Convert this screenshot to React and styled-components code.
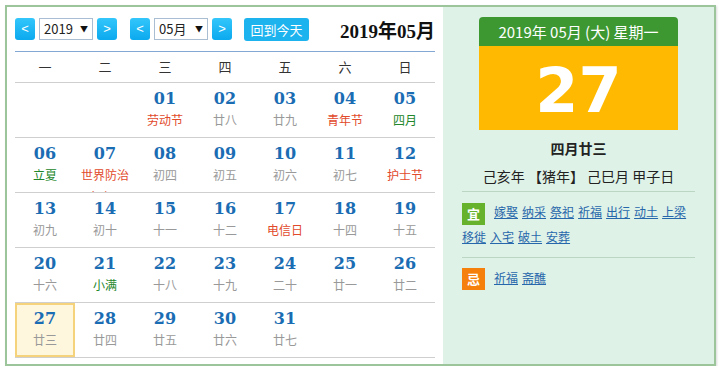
import React from 'react'
import styled, { createGlobalStyle } from 'styled-components'

const GlobalStyle = createGlobalStyle`
	body {
		margin: 0;
		background: #fff;
		font-family: "Noto Sans CJK SC", "Noto Sans", sans-serif;
	}
`

const weekdays = ['一', '二', '三', '四', '五', '六', '日']

// kind: f = festival (red), t = solar term / month start (green)
const days = [
	null, null,
	{ d: '01', l: '劳动节', k: 'f' },
	{ d: '02', l: '廿八' },
	{ d: '03', l: '廿九' },
	{ d: '04', l: '青年节', k: 'f' },
	{ d: '05', l: '四月', k: 't' },
	{ d: '06', l: '立夏', k: 't' },
	{ d: '07', l: '世界防治肉瘤日', k: 'f' },
	{ d: '08', l: '初四' },
	{ d: '09', l: '初五' },
	{ d: '10', l: '初六' },
	{ d: '11', l: '初七' },
	{ d: '12', l: '护士节', k: 'f' },
	{ d: '13', l: '初九' },
	{ d: '14', l: '初十' },
	{ d: '15', l: '十一' },
	{ d: '16', l: '十二' },
	{ d: '17', l: '电信日', k: 'f' },
	{ d: '18', l: '十四' },
	{ d: '19', l: '十五' },
	{ d: '20', l: '十六' },
	{ d: '21', l: '小满', k: 't' },
	{ d: '22', l: '十八' },
	{ d: '23', l: '十九' },
	{ d: '24', l: '二十' },
	{ d: '25', l: '廿一' },
	{ d: '26', l: '廿二' },
	{ d: '27', l: '廿三', today: true },
	{ d: '28', l: '廿四' },
	{ d: '29', l: '廿五' },
	{ d: '30', l: '廿六' },
	{ d: '31', l: '廿七' },
	null, null, null,
]

const good = ['嫁娶', '纳采', '祭祀', '祈福', '出行', '动土', '上梁', '移徙', '入宅', '破土', '安葬']
const bad = ['祈福', '斋醮']

export default function App() {
	const rows = []
	for (let i = 0; i < days.length; i += 7) rows.push(days.slice(i, i + 7))

	return (
		<>
			<GlobalStyle />
			<Frame>
				<CalendarSide>
					<Toolbar>
						<NavGroup>
							<ArrowBtn>&lt;</ArrowBtn>
							<Picker>2019<Caret>▼</Caret></Picker>
							<ArrowBtn>&gt;</ArrowBtn>
						</NavGroup>
						<NavGroup>
							<ArrowBtn>&lt;</ArrowBtn>
							<Picker>05月<Caret>▼</Caret></Picker>
							<ArrowBtn>&gt;</ArrowBtn>
						</NavGroup>
						<TodayBtn>回到今天</TodayBtn>
						<MonthTitle>2019年05月</MonthTitle>
					</Toolbar>
					<WeekRow>
						{weekdays.map(w => <WeekCell key={w}>{w}</WeekCell>)}
					</WeekRow>
					{rows.map((row, ri) => (
						<DayRow key={ri} last={ri === rows.length - 1}>
							{row.map((c, ci) => (
								<DayCell key={ci} today={c && c.today}>
									{c && (
										<>
											<DayNum>{c.d}</DayNum>
											<Lunar kind={c.k}>{c.l}</Lunar>
										</>
									)}
								</DayCell>
							))}
						</DayRow>
					))}
				</CalendarSide>

				<InfoSide>
					<DateCard>
						<CardHead>2019年 05月 (大) 星期一</CardHead>
						<CardDay>27</CardDay>
					</DateCard>
					<LunarDate>四月廿三</LunarDate>
					<GanZhi>己亥年 【猪年】 己巳月 甲子日</GanZhi>
					<Almanac>
						<Badge color="#66b22c">宜</Badge>
						{good.map((g, i) => <Deed key={i} href="#">{g}</Deed>)}
					</Almanac>
					<Almanac divided>
						<Badge color="#f6800c">忌</Badge>
						{bad.map((g, i) => <Deed key={i} href="#">{g}</Deed>)}
					</Almanac>
				</InfoSide>
			</Frame>
		</>
	)
}

const Frame = styled.div`
	margin: 5px 0 0 5px;
	width: 707px;
	height: 357px;
	border: 2px solid #9cc59c;
	display: flex;
	overflow: hidden;
	box-shadow: 1px 1px 2px rgba(0,0,0,.15);
`

const CalendarSide = styled.div`
	width: 420px;
	padding: 0 8px;
	background: #fff;
`

const Toolbar = styled.div`
	display: flex;
	align-items: center;
	gap: 13px;
	height: 45px;
	box-sizing: border-box;
	border-bottom: 1px solid #84a8d4;
`

const NavGroup = styled.div`
	display: flex;
	align-items: center;
	gap: 4px;
`

const ArrowBtn = styled.div`
	width: 20px;
	height: 22px;
	border-radius: 3px;
	background: linear-gradient(#33c6fb, #0ba9ee);
	color: #fff;
	font-size: 13px;
	line-height: 22px;
	text-align: center;
	font-family: "Liberation Sans", sans-serif;
`

const Picker = styled.div`
	width: 44px;
	height: 20px;
	padding: 0 4px;
	border: 1px solid #a9bdd3;
	display: flex;
	justify-content: space-between;
	font-size: 13px;
	line-height: 20px;
	color: #222;
`

const Caret = styled.span`
	font-size: 8px;
	color: #111;
`

const TodayBtn = styled.div`
	margin-left: -1px;
	width: 65px;
	height: 23px;
	border-radius: 3px;
	background: #1db3ef;
	color: #fff;
	font-size: 13px;
	line-height: 23px;
	text-align: center;
`

const MonthTitle = styled.div`
	margin-left: auto;
	font-family: "Liberation Serif", "Noto Sans CJK SC", serif;
	font-weight: bold;
	font-size: 19px;
	color: #111;
`

const WeekRow = styled.div`
	display: grid;
	grid-template-columns: repeat(7, 60px);
	height: 30px;
	border-bottom: 1px solid #cfcfcf;
`

const WeekCell = styled.div`
	text-align: center;
	font-size: 13px;
	line-height: 30px;
	color: #333;
`

const DayRow = styled.div`
	display: grid;
	grid-template-columns: repeat(7, 60px);
	height: 54px;
	border-bottom: ${p => (p.last ? 'none' : '1px solid #cfcfcf')};
`

const DayCell = styled.div`
	box-sizing: border-box;
	height: 54px;
	overflow: hidden;
	text-align: center;
	padding: ${p => (p.today ? '4px 4px 0' : '6px 6px 0')};
	background: ${p => (p.today ? '#fff6de' : 'transparent')};
	border: ${p => (p.today ? '2px solid #f5d27c' : 'none')};
`

const DayNum = styled.div`
	font-family: "DejaVu Serif", serif;
	font-weight: bold;
	font-size: 16px;
	line-height: 20px;
	color: #1a6db3;
`

const Lunar = styled.div`
	font-size: 12px;
	line-height: 22px;
	color: ${p => (p.kind === 'f' ? '#e24a2c' : p.kind === 't' ? '#22862a' : '#999')};
`

const InfoSide = styled.div`
	flex: 1;
	background: #dff2e7;
	padding: 10px 19px 0 19px;
`

const DateCard = styled.div`
	width: 199px;
	margin: 0 auto;
`

const CardHead = styled.div`
	height: 29px;
	background: #3e9832;
	border-radius: 4px 4px 0 0;
	color: #fff;
	font-size: 15px;
	line-height: 29px;
	text-align: center;
`

const CardDay = styled.div`
	height: 84px;
	box-sizing: border-box;
	padding-top: 6px;
	background: #ffb900;
	color: #fff;
	font-family: "DejaVu Sans", sans-serif;
	font-weight: bold;
	font-size: 62px;
	line-height: 78px;
	text-align: center;
`

const LunarDate = styled.div`
	margin-top: 8px;
	text-align: center;
	font-size: 14px;
	font-weight: bold;
	color: #222;
	line-height: 20px;
`

const GanZhi = styled.div`
	margin-top: 8px;
	padding-bottom: 5px;
	border-bottom: 1px solid #bcd6c4;
	text-align: center;
	font-size: 14px;
	color: #222;
	line-height: 20px;
`

const Almanac = styled.div`
	padding: 8px 0 8px;
	line-height: 24px;
	font-size: 12px;
	border-top: ${p => (p.divided ? '1px solid #bcd6c4' : 'none')};
`

const Badge = styled.span`
	display: inline-block;
	width: 23px;
	height: 22px;
	line-height: 22px;
	text-align: center;
	background: ${p => p.color};
	color: #fff;
	font-size: 13px;
	font-weight: bold;
	margin-right: 9px;
	vertical-align: middle;
`

const Deed = styled.a`
	color: #2767ab;
	text-decoration: underline;
	margin-right: 4px;
`
